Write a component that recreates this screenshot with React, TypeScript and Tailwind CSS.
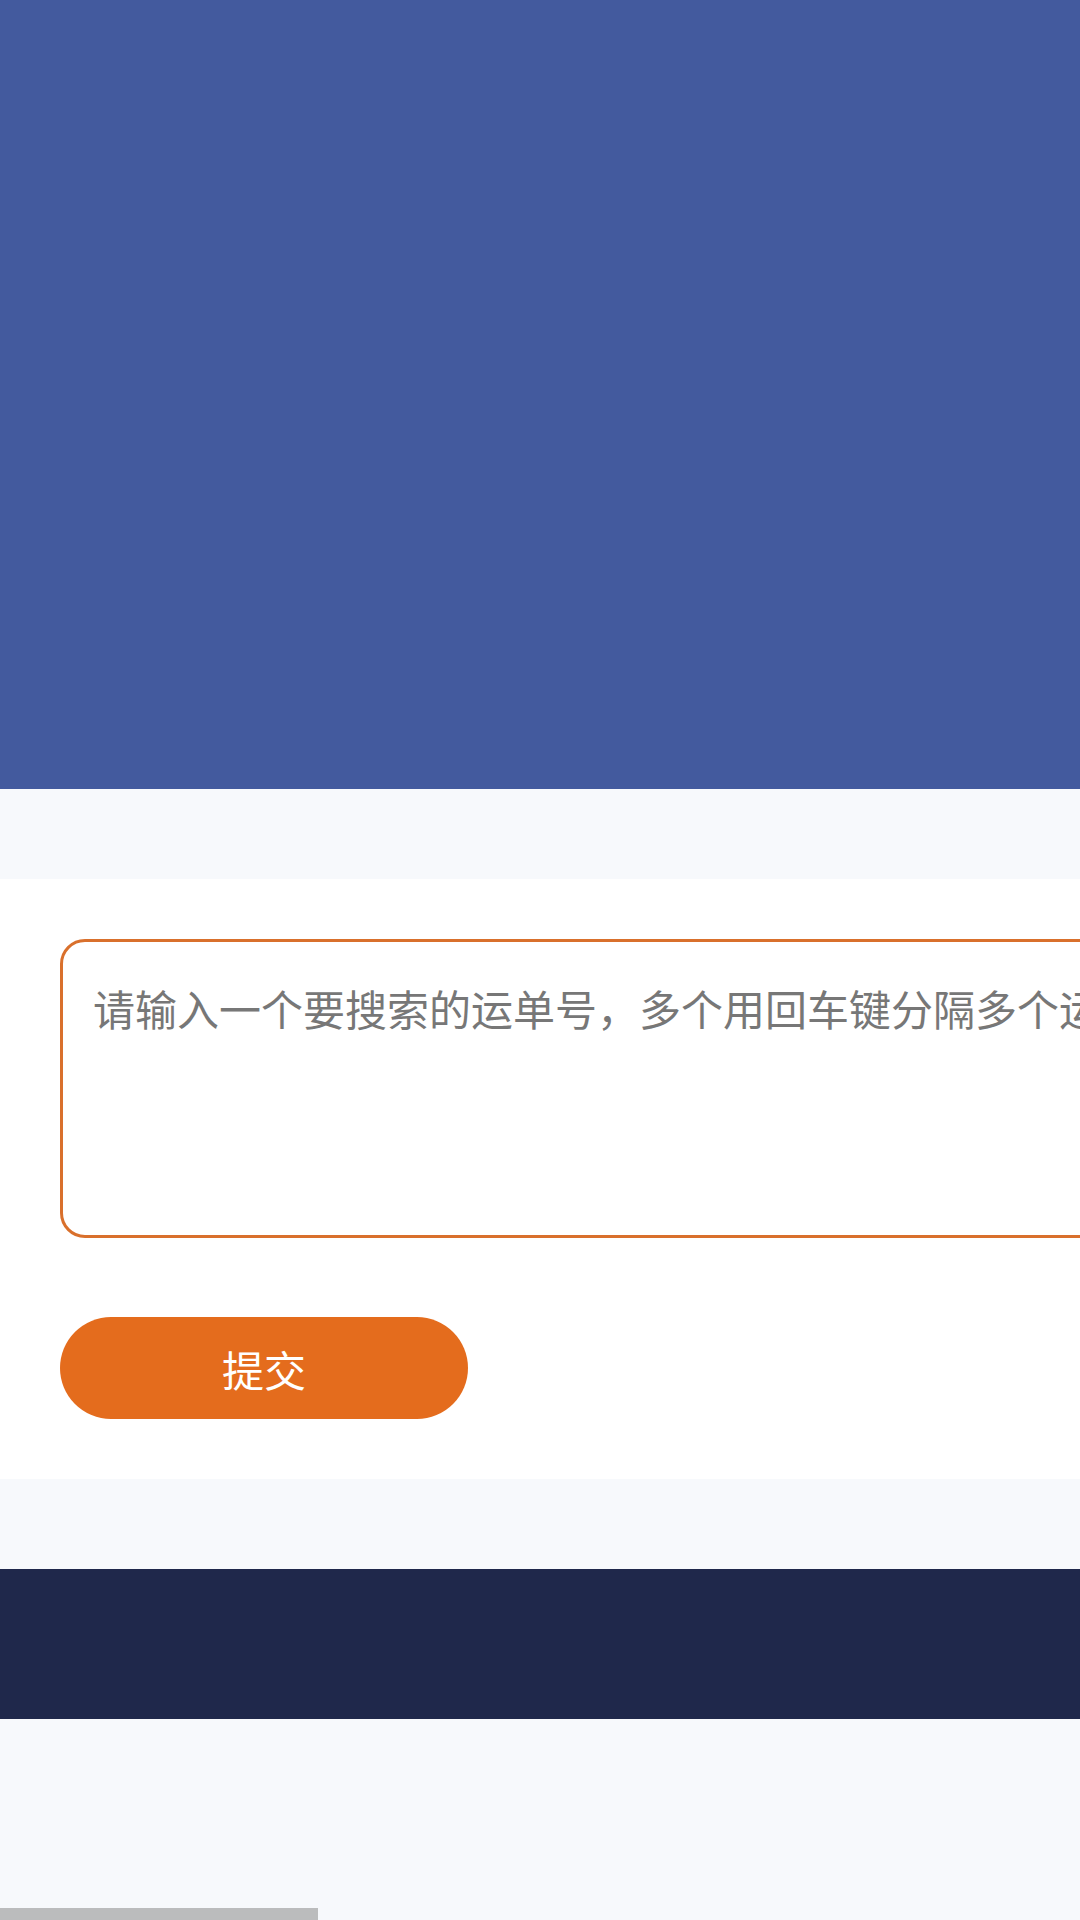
import React from "react";

export default function App() {
  const cjk = { fontFamily: '"Noto Sans CJK SC", "Microsoft YaHei", sans-serif' };
  return (
    <div className="w-full min-h-[1920px] overflow-hidden bg-[#f7f9fc]" style={cjk}>
      <div className="h-[789px] bg-[#435a9e]" />
      <div className="h-[90px] bg-[#f7f9fc]" />
      <div className="bg-white pt-[60px] pb-[60px] pl-[60px] flex flex-col items-start">
        <textarea
          className="w-[1500px] shrink-0 h-[299px] border-[3px] border-[#d9702c] rounded-[25px] px-[30px] pt-[34px] text-[42px] leading-[1.5] text-[#333] placeholder:text-[#777777] outline-none resize-none bg-white"
          placeholder="请输入一个要搜索的运单号，多个用回车键分隔多个运单号"
        />
        <button className="mt-[79px] w-[408px] h-[102px] rounded-full bg-[#e46c1d] text-white text-[42px] flex items-center justify-center">
          提交
        </button>
      </div>
      <div className="h-[90px] bg-[#f7f9fc]" />
      <div className="h-[150px] bg-[#1f284b]" />
      <div className="h-[189px] bg-[#f7f9fc]" />
      <div className="h-[12px] w-[318px] bg-[#bbbcbd]" />
    </div>
  );
}
